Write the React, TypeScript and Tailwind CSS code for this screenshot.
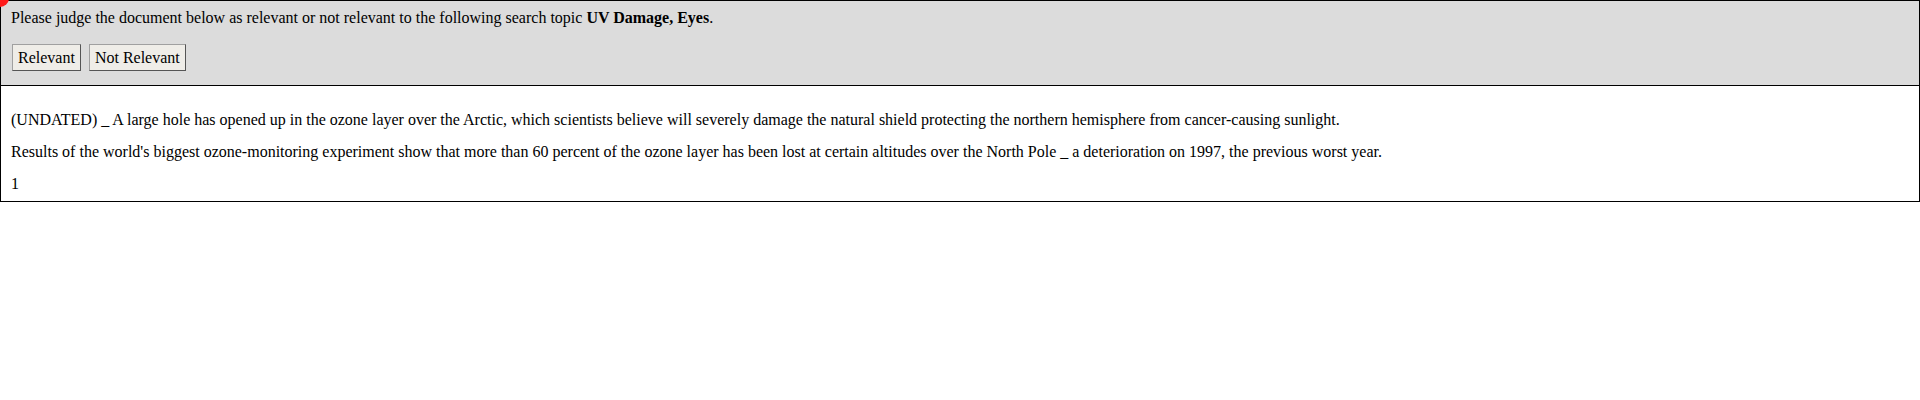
export default function App() {
  return (
    <div className="relative w-full font-['Liberation_Serif',serif] text-[16px] text-black">
      <div className="absolute -left-[9px] -top-[11px] z-10 h-[18px] w-[18px] rounded-full bg-[#ff1a1a]" />

      <div className="h-[86px] border border-black bg-[#dcdcdc] px-[10px] pt-[8px]">
        <p className="leading-[18px]">
          Please judge the document below as relevant or not relevant to the following search topic{" "}
          <b>UV Damage, Eyes</b>.
        </p>
        <div className="mt-[17px] flex gap-2 pl-[1px]">
          <button className="h-[27px] border border-[#a0a0a0] border-r-[#555] border-b-[#555] bg-[#efede8] px-[5px] leading-[18px]">
            Relevant
          </button>
          <button className="h-[27px] border border-[#a0a0a0] border-r-[#555] border-b-[#555] bg-[#efede8] px-[5px] leading-[18px]">
            Not Relevant
          </button>
        </div>
      </div>

      <div className="flex h-[116px] flex-col gap-[14px] border-x border-b border-black px-[10px] pt-[25px] leading-[18px]">
        <p>
          (UNDATED) _ A large hole has opened up in the ozone layer over the Arctic, which scientists believe will
          severely damage the natural shield protecting the northern hemisphere from cancer-causing sunlight.
        </p>
        <p>
          Results of the world's biggest ozone-monitoring experiment show that more than 60 percent of the ozone layer
          has been lost at certain altitudes over the North Pole _ a deterioration on 1997, the previous worst year.
        </p>
        <p>1</p>
      </div>
    </div>
  );
}
